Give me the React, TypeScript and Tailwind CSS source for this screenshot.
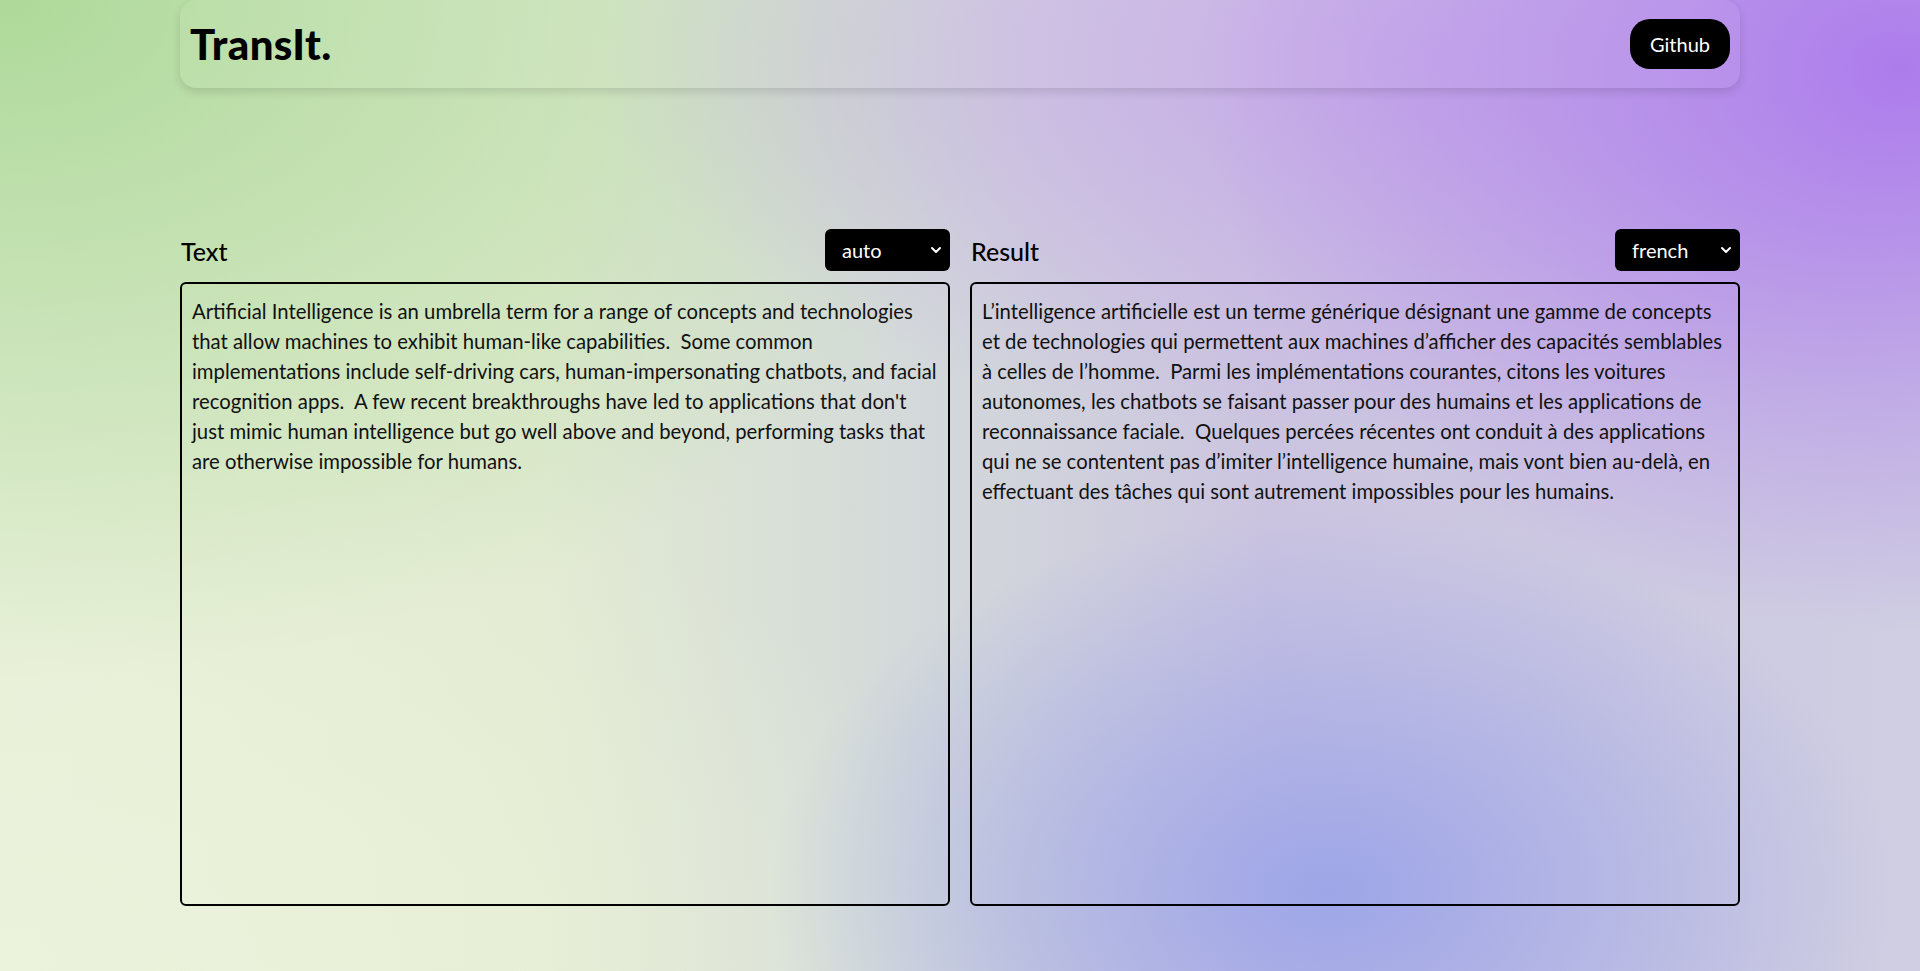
import React, { useState } from 'react';
import { ChevronDown } from 'lucide-react';

const SOURCE_TEXT =
	"Artificial Intelligence is an umbrella term for a range of concepts and technologies that allow machines to exhibit human-like capabilities.  Some common implementations include self-driving cars, human-impersonating chatbots, and facial recognition apps.  A few recent breakthroughs have led to applications that don't just mimic human intelligence but go well above and beyond, performing tasks that are otherwise impossible for humans.";

const RESULT_TEXT =
	'L’intelligence artificielle est un terme générique désignant une gamme de concepts et de technologies qui permettent aux machines d’afficher des capacités semblables à celles de l’homme.  Parmi les implémentations courantes, citons les voitures autonomes, les chatbots se faisant passer pour des humains et les applications de reconnaissance faciale.  Quelques percées récentes ont conduit à des applications qui ne se contentent pas d’imiter l’intelligence humaine, mais vont bien au-delà, en effectuant des tâches qui sont autrement impossibles pour les humains.';

const LANGS = ['auto', 'english', 'french', 'german', 'spanish'];

interface LangSelectProps {
	value: string;
	onChange: (val: string) => void;
}

const LangSelect = ({ value, onChange }: LangSelectProps) => (
	<div className="relative w-[125px] h-[42px]">
		<select
			value={value}
			onChange={(e) => onChange(e.target.value)}
			className="appearance-none w-full h-full bg-black text-white rounded-md pl-[17px] pr-8 text-[20px] outline-none cursor-pointer"
		>
			{LANGS.map((l) => (
				<option key={l} value={l}>
					{l}
				</option>
			))}
		</select>
		<ChevronDown
			size={16}
			strokeWidth={3}
			className="absolute right-[6px] top-1/2 -translate-y-1/2 text-white pointer-events-none"
		/>
	</div>
);

interface PanelProps {
	label: string;
	lang: string;
	onLang: (val: string) => void;
	value: string;
	onChange?: (val: string) => void;
	readOnly?: boolean;
}

const Panel = ({ label, lang, onLang, value, onChange, readOnly }: PanelProps) => (
	<div className="flex flex-col">
		<div className="flex flex-row items-center justify-between h-[42px]">
			<h2 className="text-[25px] font-medium pl-[1px] pt-[3px]">{label}</h2>
			<LangSelect value={lang} onChange={onLang} />
		</div>
		<textarea
			value={value}
			readOnly={readOnly}
			onChange={(e) => onChange?.(e.target.value)}
			className="mt-[11px] h-[624px] w-full resize-none overflow-hidden rounded-md border-2 border-black bg-transparent pl-[10px] pr-[6px] pt-[12px] pb-[10px] text-[20.3px] leading-[30px] text-[#111] outline-none"
		/>
	</div>
);

export default function App() {
	const [text, setText] = useState(SOURCE_TEXT);
	const [from, setFrom] = useState('auto');
	const [to, setTo] = useState('french');

	return (
		<div
			className="min-h-screen w-full text-black bg-[radial-gradient(ellipse_560px_380px_at_1330px_890px,#9ea6e8,transparent),radial-gradient(ellipse_700px_560px_at_1900px_70px,#ad7cec,transparent),radial-gradient(ellipse_800px_380px_at_1400px_60px,#c7ade7,transparent),radial-gradient(ellipse_1050px_680px_at_0px_0px,#aed99a,transparent),radial-gradient(ellipse_1000px_560px_at_0px_971px,#ecf3dc,transparent),linear-gradient(90deg,#e6efd7_0%,#e2ebd2_28%,#d3d9da_48%,#cbc4e0_66%,#cfcee2_100%)]"
			style={{ fontFamily: 'Lato, "Noto Sans", sans-serif' }}
		>
			<div className="w-[1560px] mx-auto">
				<header className="h-[88px] flex flex-row items-center justify-between px-[10px] rounded-2xl bg-white/5 shadow-[0_4px_10px_rgba(0,0,0,0.12)]">
					<h1 className="text-[42px] font-black tracking-[0.01em] leading-none">TransIt.</h1>
					<a
						href="#"
						className="w-[100px] h-[50px] flex items-center justify-center rounded-[20px] bg-black text-white text-[20px]"
					>
						Github
					</a>
				</header>

				<main className="grid grid-cols-2 gap-[20px] pt-[141px]">
					<Panel label="Text" lang={from} onLang={setFrom} value={text} onChange={setText} />
					<Panel label="Result" lang={to} onLang={setTo} value={RESULT_TEXT} readOnly />
				</main>
			</div>
		</div>
	);
}
